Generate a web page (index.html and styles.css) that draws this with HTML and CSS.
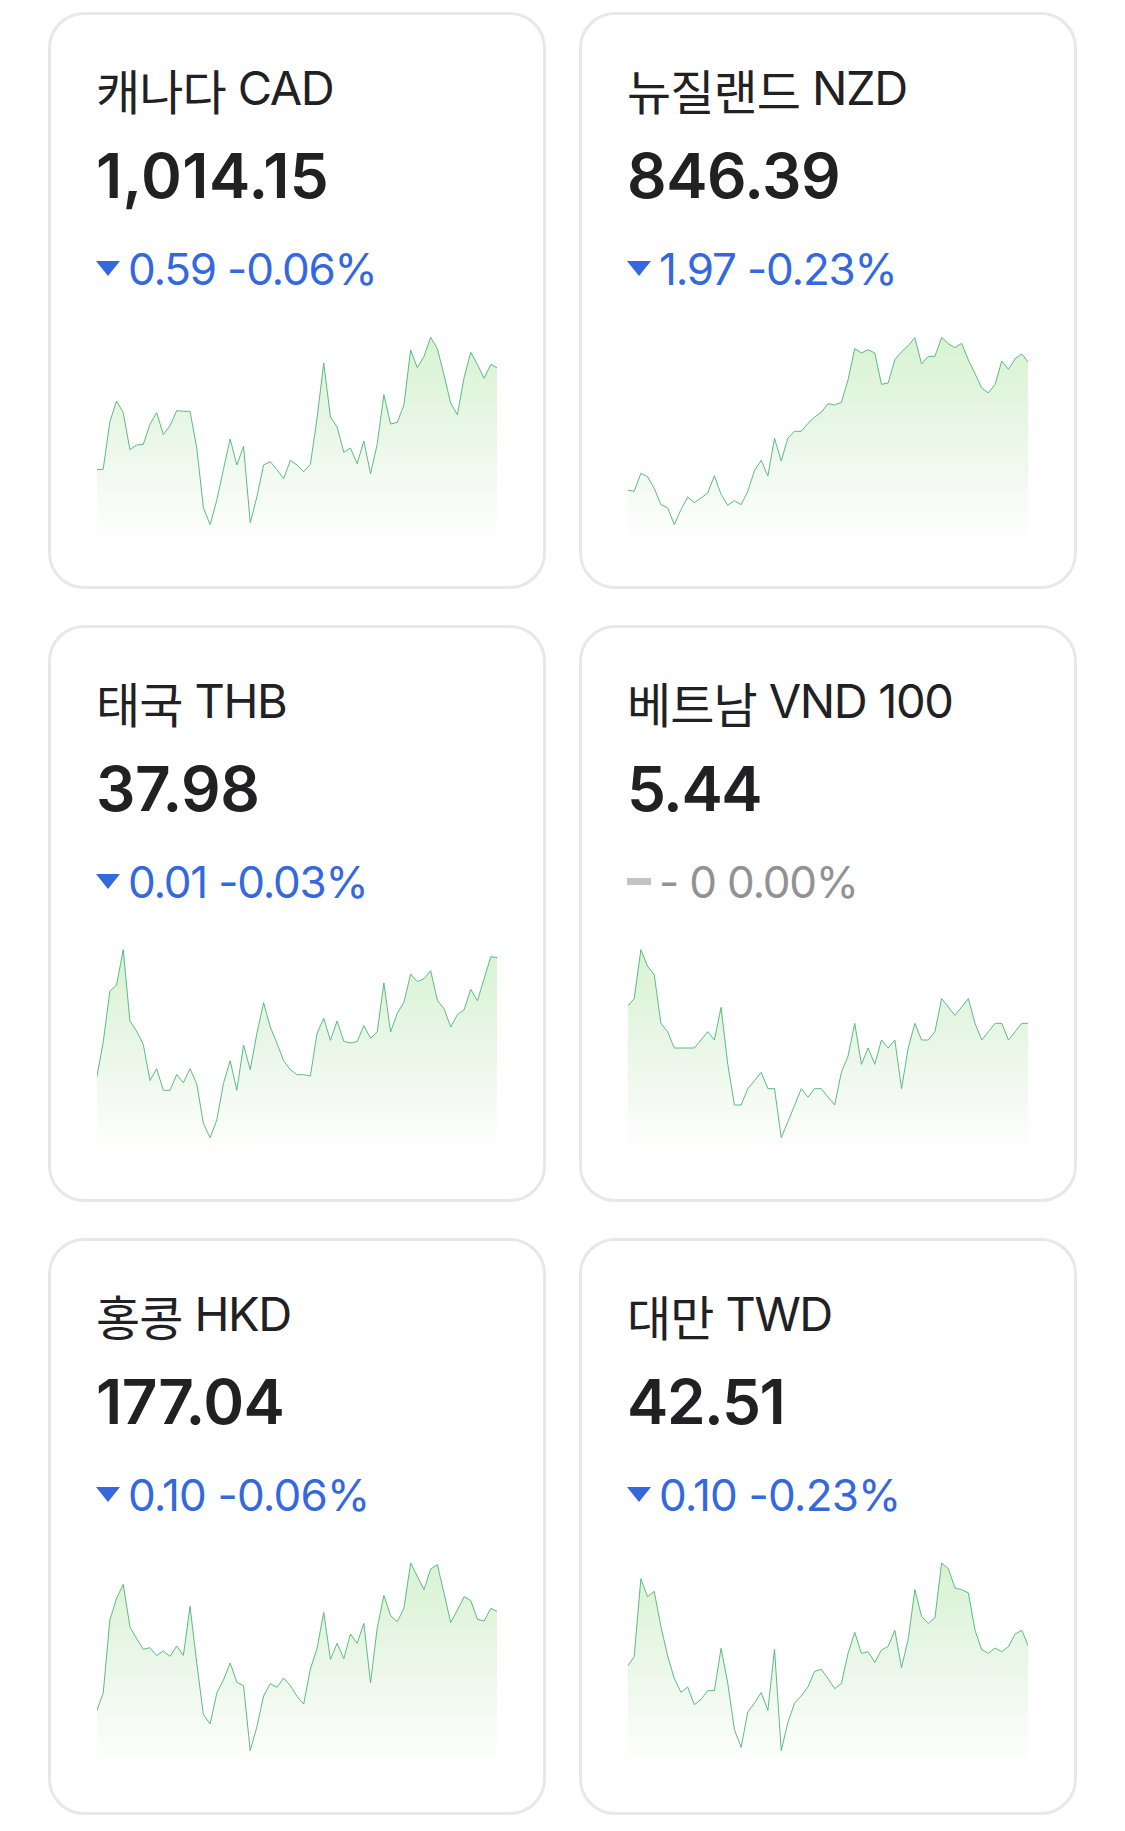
FILE: index.html
```html
<!DOCTYPE html>
<html lang="ko">
  <head>
    <meta charset="UTF-8" />
    <meta name="viewport" content="width=device-width, initial-scale=1.0" />
    <title>환율</title>
    <link rel="stylesheet" href="styles.css">
  </head>
  <body>
    <svg width="0" height="0" class="defs">
      <defs>
        <linearGradient id="fill" gradientUnits="userSpaceOnUse" x1="0" y1="36" x2="0" y2="654">
          <stop offset="0" stop-color="#d8f3d2" />
          <stop offset="0.5" stop-color="#ebf7e9" />
          <stop offset="1" stop-color="#ffffff" />
        </linearGradient>
      </defs>
    </svg>

    <div class="rates">
      <div class="card">
        <h2><span class="ko">캐나다</span> CAD</h2>
        <div class="price wider">1,014.15</div>
        <div class="change down"><i class="icon"></i>0.59 -0.06%</div>
        <svg class="chart" data-chart="cad" viewBox="0 0 1200 654"></svg>
      </div>

      <div class="card">
        <h2><span class="ko">뉴질랜드</span> NZD</h2>
        <div class="price wide">846.39</div>
        <div class="change down"><i class="icon"></i>1.97 -0.23%</div>
        <svg class="chart" data-chart="nzd" viewBox="0 0 1200 654"></svg>
      </div>

      <div class="card">
        <h2><span class="ko">태국</span> THB</h2>
        <div class="price wide">37.98</div>
        <div class="change down"><i class="icon"></i>0.01 -0.03%</div>
        <svg class="chart" data-chart="thb" viewBox="0 0 1200 654"></svg>
      </div>

      <div class="card">
        <h2><span class="ko">베트남</span> VND 100</h2>
        <div class="price">5.44</div>
        <div class="change same"><i class="icon"></i>- 0 0.00%</div>
        <svg class="chart" data-chart="vnd" viewBox="0 0 1200 654"></svg>
      </div>

      <div class="card">
        <h2><span class="ko">홍콩</span> HKD</h2>
        <div class="price wide">177.04</div>
        <div class="change down wide"><i class="icon"></i>0.10 -0.06%</div>
        <svg class="chart" data-chart="hkd" viewBox="0 0 1200 654"></svg>
      </div>

      <div class="card">
        <h2><span class="ko">대만</span> TWD</h2>
        <div class="price">42.51</div>
        <div class="change down wide"><i class="icon"></i>0.10 -0.23%</div>
        <svg class="chart" data-chart="twd" viewBox="0 0 1200 654"></svg>
      </div>
    </div>

    <script src="charts.js"></script>
  </body>
</html>
```
FILE: styles.css
```css
body {
  margin: 0;
  background: #fff;
  color: #212124;
  font-family: Inter, "Noto Sans CJK KR", sans-serif;
}

.defs {
  display: block;
}

.rates {
  display: grid;
  grid-template-columns: 498px 498px;
  gap: 36px 33px;
  padding: 12px 48px 16px;
}

.card {
  box-sizing: border-box;
  height: 577px;
  padding: 46px 45px 40px;
  border: 3px solid #e8e8ea;
  border-radius: 36px;
}

h2 {
  height: 54px;
  margin: 0;
  font-size: 47px;
  font-weight: 400;
  line-height: 54px;
  letter-spacing: -1.35px;
  white-space: nowrap;
}

.ko {
  font-family: "Noto Sans CJK KR", sans-serif;
  font-size: 48px;
  line-height: 1;
  letter-spacing: -0.9px;
  vertical-align: -5px;
}

.price {
  margin-top: 23px;
  font-size: 62px;
  font-weight: 600;
  line-height: 75px;
  letter-spacing: -1.4px;
}

.price.wide {
  letter-spacing: -0.5px;
}

.price.wider {
  letter-spacing: 0.4px;
}

.change {
  display: flex;
  align-items: center;
  margin-top: 26px;
  font-size: 44px;
  line-height: 60px;
  letter-spacing: -1.2px;
  white-space: nowrap;
}

.change.wide {
  letter-spacing: -0.8px;
}

.icon {
  width: 24px;
  margin: 0 8px 1px 0;
}

.down {
  color: #3468de;
}

.down .icon {
  height: 15px;
  background: #3468de;
  clip-path: polygon(0 0, 100% 0, 50% 100%);
}

.same {
  color: #929294;
}

.same .icon {
  height: 7px;
  background: #c4c4c6;
}

.chart {
  display: block;
  width: 400px;
  height: 218px;
  margin: 26px 0 0 1px;
}

.chart .area {
  fill: url(#fill);
}

.chart .line {
  fill: none;
  stroke: #4fb67c;
  stroke-width: 2.8;
}
```
FILE: charts.js
```js
const charts = {
  cad: [434, 433, 290, 228, 263, 374, 360, 358, 298, 263, 329, 302, 257, 259, 259, 370, 548, 599, 525, 433, 342, 420, 364, 593, 515, 420, 410, 434, 461, 406, 420, 440, 418, 280, 114, 276, 306, 382, 369, 416, 348, 446, 358, 209, 297, 292, 240, 75, 128, 94, 37, 71, 150, 235, 269, 158, 82, 119, 160, 118, 129],
  nzd: [495, 499, 445, 455, 490, 539, 548, 599, 554, 516, 533, 519, 504, 452, 508, 541, 527, 539, 499, 437, 406, 453, 340, 408, 339, 319, 319, 295, 276, 262, 236, 240, 232, 165, 71, 84, 74, 84, 178, 174, 104, 80, 62, 38, 117, 94, 94, 37, 56, 68, 55, 105, 146, 189, 204, 178, 108, 133, 101, 87, 113],
  thb: [421, 313, 160, 141, 35, 249, 279, 319, 428, 392, 457, 457, 410, 434, 392, 438, 557, 599, 546, 436, 368, 457, 321, 395, 286, 194, 267, 316, 368, 395, 410, 410, 414, 286, 241, 307, 249, 310, 315, 311, 263, 301, 282, 135, 282, 226, 193, 108, 131, 122, 98, 187, 212, 267, 230, 215, 154, 188, 122, 56, 59],
  vnd: [205, 182, 35, 85, 110, 256, 281, 330, 330, 330, 330, 306, 281, 306, 208, 379, 501, 501, 452, 428, 403, 452, 452, 599, 551, 502, 452, 478, 452, 452, 477, 501, 403, 354, 256, 379, 330, 379, 306, 330, 306, 452, 330, 256, 306, 306, 281, 182, 207, 232, 207, 182, 256, 306, 281, 256, 256, 306, 281, 256, 256],
  hkd: [481, 427, 207, 142, 100, 227, 263, 295, 290, 314, 300, 316, 285, 313, 166, 337, 491, 519, 426, 387, 336, 394, 404, 599, 527, 435, 398, 409, 381, 404, 436, 459, 354, 292, 184, 325, 277, 323, 249, 277, 217, 395, 232, 133, 194, 212, 172, 36, 76, 116, 54, 41, 127, 215, 177, 137, 149, 205, 210, 172, 182],
  twd: [346, 317, 83, 137, 121, 227, 314, 382, 424, 408, 461, 445, 419, 419, 292, 397, 536, 589, 483, 456, 425, 478, 295, 599, 514, 456, 435, 408, 361, 355, 383, 413, 398, 307, 244, 307, 302, 334, 297, 286, 238, 350, 265, 116, 196, 217, 201, 36, 53, 111, 116, 126, 238, 296, 307, 291, 302, 287, 249, 238, 287],
};

const STEP = 20.05;
const BASE = 654;

document.querySelectorAll(".chart").forEach((svg) => {
  const values = charts[svg.dataset.chart];
  // first and last points sit just outside the box
  const points = values.map((y, i) => `${(i * STEP - 1.5).toFixed(1)},${y}`);

  svg.innerHTML = `
    <polygon class="area" points="-1.5,${BASE} ${points.join(" ")} 1201.5,${BASE}" />
    <polyline class="line" points="${points.join(" ")}" />
  `;
});
```
